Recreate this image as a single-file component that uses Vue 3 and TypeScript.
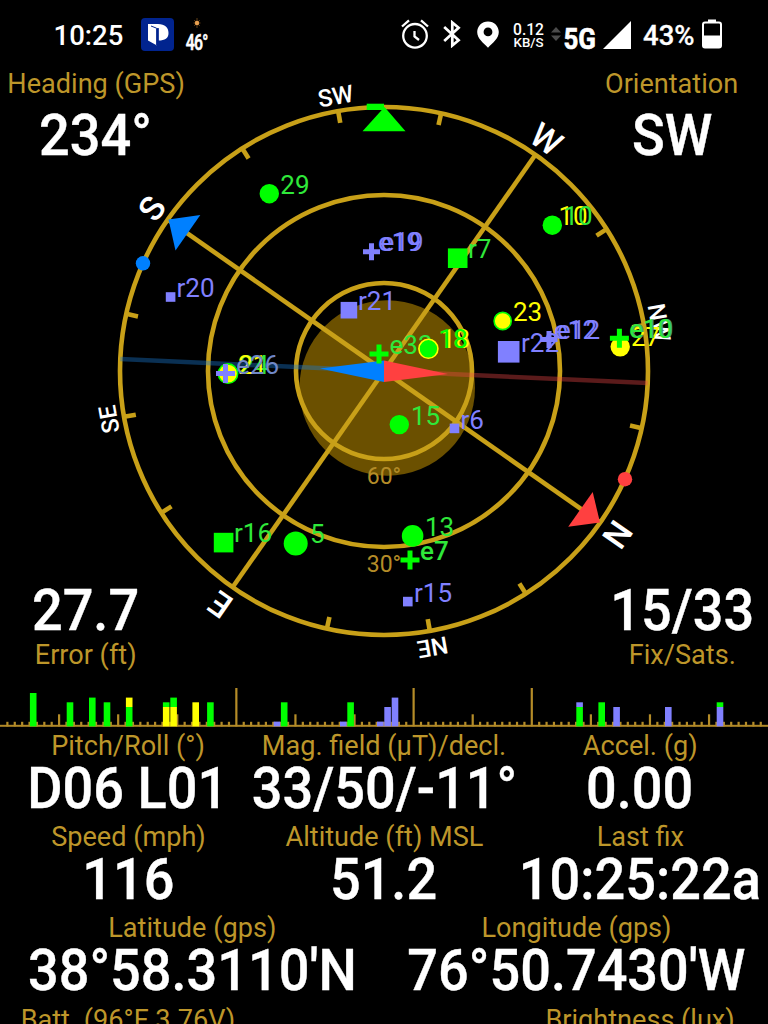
<script setup lang="ts">
type Shape = 'dot' | 'box' | 'plus'
interface Satellite {
  shape: Shape
  x: number
  y: number
  size: number
  color: string
  ring?: string
}
interface Tag {
  text: string
  x: number
  y: number
  color: string
  bold?: boolean
}
interface Bar {
  x: number
  parts: { top: number; bottom: number; color: string }[]
}

const G = '#00ff00'
const T = '#2fe83a'
const Y = '#ffff00'
const P = '#8080ff'
const BASE = 726.4

const cx = 384
const cy = 371
const rings = [264, 176, 88]
const minorTicks = [12.5, 57.5, 80, 102.5, 147.5, 170, 192.5, 237.5, 260, 282.5, 327.5, 350]
const cardinals = [
  { text: 'S', angle: -55, r: 271.5 },
  { text: 'W', angle: 35, r: 271 },
  { text: 'N', angle: 125, r: 273 },
  { text: 'E', angle: 215, r: 273 },
]
const intercardinals = [
  { text: 'SW', angle: -10, r: 270.7 },
  { text: 'NW', angle: 80, r: 271 },
  { text: 'NE', angle: 170, r: 272 },
  { text: 'SE', angle: -100, r: 270.7 },
]

const satellites: Satellite[] = [
  { shape: 'dot', x: 269.3, y: 193.7, size: 9.7, color: G },
  { shape: 'box', x: 170.6, y: 297, size: 9.6, color: P },
  { shape: 'box', x: 348.9, y: 310.2, size: 16.6, color: P },
  { shape: 'plus', x: 371.5, y: 251.7, size: 17, color: P },
  { shape: 'plus', x: 549, y: 339.5, size: 17, color: P },
  { shape: 'box', x: 457.7, y: 258.2, size: 19.6, color: G },
  { shape: 'dot', x: 552.3, y: 225.2, size: 9.7, color: G },
  { shape: 'dot', x: 502.7, y: 321, size: 8.6, color: Y, ring: G },
  { shape: 'box', x: 508.7, y: 351.8, size: 21.6, color: P },
  { shape: 'dot', x: 620.2, y: 346.8, size: 9.7, color: Y },
  { shape: 'plus', x: 619.4, y: 338.3, size: 19, color: G },
  { shape: 'plus', x: 379, y: 354, size: 19, color: G },
  { shape: 'dot', x: 428.4, y: 348.8, size: 9.5, color: G, ring: Y },
  { shape: 'dot', x: 228, y: 373.6, size: 9.7, color: Y, ring: G },
  { shape: 'plus', x: 225.5, y: 373.6, size: 19, color: P },
  { shape: 'box', x: 223.6, y: 542.6, size: 19.6, color: G },
  { shape: 'dot', x: 295.7, y: 543.6, size: 12, color: G },
  { shape: 'dot', x: 412.6, y: 535.9, size: 10.8, color: G },
  { shape: 'plus', x: 410, y: 560, size: 19, color: G },
  { shape: 'box', x: 407.8, y: 601.6, size: 9.6, color: P },
  { shape: 'dot', x: 399.3, y: 424.6, size: 9.7, color: G },
  { shape: 'box', x: 454.5, y: 428.4, size: 9.6, color: P },
]

const underTags: Tag[] = [
  { text: 'e33', x: 389.5, y: 354, color: T },
  { text: 'r22', x: 521, y: 351.5, color: P },
]

const tags: Tag[] = [
  { text: '29', x: 280.3, y: 194, color: T },
  { text: 'r20', x: 176.5, y: 296.8, color: P },
  { text: 'r21', x: 358, y: 310, color: P },
  { text: 'e19', x: 378, y: 251.3, color: P },
  { text: 'e19', x: 380.5, y: 251.3, color: P },
  { text: 'r7', x: 468, y: 258, color: T },
  { text: '10', x: 558.5, y: 225, color: Y },
  { text: '10', x: 563.5, y: 225, color: T },
  { text: '23', x: 513, y: 321, color: Y },
  { text: 'e12', x: 554, y: 339, color: P },
  { text: 'e12', x: 557, y: 339, color: P },
  { text: '27', x: 631, y: 346.3, color: Y },
  { text: 'e10', x: 630.5, y: 338.3, color: '#4aa070' },
  { text: 'e10', x: 629, y: 338.3, color: T },
  { text: '18', x: 441, y: 348.3, color: Y },
  { text: '18', x: 438.5, y: 348.3, color: G },
  { text: '24', x: 239.5, y: 373.5, color: T },
  { text: '21', x: 238, y: 373.5, color: Y },
  { text: 'e26', x: 236, y: 373.5, color: '#7088c8' },
  { text: 'r16', x: 234, y: 542.4, color: T },
  { text: '5', x: 310, y: 543.3, color: T },
  { text: '13', x: 425, y: 535.6, color: T },
  { text: 'e7', x: 420, y: 560, color: T, bold: true },
  { text: 'r15', x: 414, y: 601.6, color: P },
  { text: '15', x: 411, y: 424.8, color: T },
  { text: 'r6', x: 460.5, y: 428.6, color: P },
]

const solid = (x: number, top: number, color: string): Bar => ({ x, parts: [{ top, bottom: BASE, color }] })
const split = (x: number, top: number, upper: string, lower: string): Bar => ({
  x,
  parts: [
    { top, bottom: 707, color: upper },
    { top: 707, bottom: BASE, color: lower },
  ],
})

const bars: Bar[] = [
  solid(33.2, 693, G),
  solid(70, 702.3, G),
  solid(92.3, 697.6, G),
  solid(107, 702.3, G),
  split(129.2, 697.6, Y, G),
  split(166.2, 702.3, G, Y),
  split(173.6, 697.6, G, Y),
  solid(195.7, 702.3, Y),
  solid(210.4, 702.3, G),
  solid(277, 721.6, P),
  solid(284.2, 702.3, G),
  solid(343.3, 721.6, P),
  solid(350.6, 702.3, G),
  solid(380.3, 721.6, P),
  solid(387.6, 707, P),
  solid(395, 697.6, P),
  split(579.6, 702.3, P, G),
  solid(601.7, 702.3, G),
  solid(616.6, 707, P),
  solid(668.3, 707, P),
  split(720, 702.3, G, P),
]

const STEP = 7.386
const tall = [32, 56, 72]
const scaleTicks = Array.from({ length: 103 }, (_, i) => {
  const n = i + 1
  const top = tall.includes(n) ? 688 : n % 8 === 0 ? 714.3 : 721.8
  return { x: n * STEP, top }
})

const rows = [
  [
    { label: 'Pitch/Roll (°)', value: 'D06 L01' },
    { label: 'Mag. field (µT)/decl.', value: '33/50/-11°' },
    { label: 'Accel. (g)', value: '0.00' },
  ],
  [
    { label: 'Speed (mph)', value: '116' },
    { label: 'Altitude (ft) MSL', value: '51.2' },
    { label: 'Last fix', value: '10:25:22a' },
  ],
  [
    { label: 'Latitude (gps)', value: "38°58.3110'N" },
    { label: 'Longitude (gps)', value: "76°50.7430'W" },
  ],
  [
    { label: 'Batt. (96°F 3.76V)', value: '' },
    { label: '', value: '' },
    { label: 'Brightness (lux)', value: '' },
  ],
]
</script>

<template>
  <main class="screen">
    <header class="status">
      <span class="clock">10:25</span>
      <svg class="app" width="33" height="33" viewBox="0 0 33 33">
        <rect width="33" height="33" rx="4" fill="#01248f" />
        <path d="M7 6H17C24 6 27.5 9.500 27.500 15S24 22.500 17.500 22.500V10.500L11.500 8.200H16V27.500L7 22.500Z" fill="#fff" />
        <path d="M10 8L15.600 10.200V27.300M17.200 10V23" fill="none" stroke="#01248f" stroke-width="1" />
      </svg>
      <span class="weather">
        <svg width="8" height="10" viewBox="0 0 8 10">
          <path d="M4 0V10M.5 5H7.500M1.200 2L6.800 8M6.800 2L1.200 8" stroke="#8a5a20" stroke-width=".7" />
          <circle cx="4" cy="5" r="2.200" fill="#e8a050" />
        </svg>
        <span class="temp">46°</span>
      </span>
      <span class="grow"></span>
      <svg class="alarm" width="28" height="30" viewBox="0 0 28 30" fill="none" stroke="#fff" stroke-width="2.300">
        <circle cx="14" cy="16.800" r="11.800" />
        <path d="M13.500 12V17.500L18 21M1 7.500L8 1.300M20 1.300L27 7.500" />
      </svg>
      <svg class="bt" width="18" height="28" viewBox="0 0 18 28" fill="none" stroke="#fff" stroke-width="2.700">
        <path d="M1.200 7L15.600 20.300L9.300 25.500V2.500L15.600 7.700L1.200 21" />
      </svg>
      <svg class="pin" width="22" height="27" viewBox="0 0 22 27">
        <path d="M11 .5C4.800 .5.200 5.200.200 11C.2 17.500 6 21.500 11 26.800C16 21.500 21.800 17.500 21.800 11C21.800 5.200 17.200.500 11 .500ZM11 6.500A4.400 4.400 0 1 1 11 15.300A4.400 4.400 0 1 1 11 6.500Z" fill="#fff" fill-rule="evenodd" />
      </svg>
      <svg class="rate" width="32" height="30" viewBox="0 0 32 30">
        <text x="0" y="15.500" font-size="16.500" textLength="31" lengthAdjust="spacingAndGlyphs">0.12</text>
        <text x="0.500" y="27.500" font-size="13.500" textLength="30" lengthAdjust="spacingAndGlyphs">KB/S</text>
      </svg>
      <svg class="arrows" width="10" height="14" viewBox="0 0 10 14" fill="#4b4b4b">
        <path d="M0 5.500L5 0L10 5.500ZM0 8.500L5 14L10 8.500Z" />
      </svg>
      <svg class="net" width="34" height="40" viewBox="0 0 34 40">
        <text x="0.500" y="31.300" font-size="29.500" textLength="32.500" lengthAdjust="spacingAndGlyphs">5G</text>
      </svg>
      <svg class="signal" width="28" height="28" viewBox="0 0 28 28"><path d="M28 0V28H0Z" fill="#fff" /></svg>
      <span class="percent">43%</span>
      <svg class="battery" width="20" height="30" viewBox="0 0 20 30">
        <path d="M6 3V.500H14V3" fill="#fff" />
        <rect x="1" y="3.500" width="18" height="25" rx="2" fill="none" stroke="#fff" stroke-width="2" />
        <path d="M1 16.500H19V28.500H1Z" fill="#fff" />
      </svg>
    </header>

    <section class="sky">
      <svg class="plot" width="768" height="619" viewBox="0 67 768 619">
        <circle cx="387.200" cy="388" r="87.800" fill="#6b5000" />
        <g class="grid">
          <circle v-for="r in rings" :key="r" :cx="cx" :cy="cy" :r="r" />
          <path
            v-for="c in cardinals"
            :key="c.text"
            :d="`M${cx} ${cy}V${cy - 264}`"
            :transform="`rotate(${c.angle} ${cx} ${cy})`"
          />
          <path
            v-for="a in minorTicks"
            :key="a"
            :d="`M${cx} ${cy - 252}V${cy - 264}`"
            :transform="`rotate(${a} ${cx} ${cy})`"
          />
        </g>
        <g class="depth">
          <text x="384" y="483.500">60°</text>
          <text x="384" y="571.500">30°</text>
        </g>
        <g class="points">
          <text
            v-for="c in cardinals"
            :key="c.text"
            class="major"
            :x="cx"
            :y="cy - c.r"
            :transform="`rotate(${c.angle} ${cx} ${cy})`"
          >{{ c.text }}</text>
          <text
            v-for="c in intercardinals"
            :key="c.text"
            :x="cx"
            :y="cy - c.r"
            :transform="`rotate(${c.angle} ${cx} ${cy})`"
          >{{ c.text }}</text>
        </g>
        <path d="M362.500 131.300H405.500L384.500 107Z" fill="#0f0" />
        <path d="M366.700 103.700H384V110H366.700Z" fill="#0f0" />
        <path d="M168.500 219.500L200.300 215L175.500 250.500Z" fill="#0080ff" />
        <path d="M600 522.500L592.700 492L568.200 526.700Z" fill="#ff4040" />
        <circle cx="143" cy="263.300" r="7.200" fill="#0080ff" />
        <circle cx="625" cy="479.200" r="7.200" fill="#ff4040" />
        <g :transform="`rotate(2.6 ${cx} ${cy})`">
          <path d="M120 371H384" stroke="#1878d0" stroke-opacity=".4" stroke-width="4.500" />
          <path d="M384 371H648" stroke="#f04848" stroke-opacity=".38" stroke-width="4.500" />
        </g>
        <path d="M320 368.500L384 360.500V382Z" fill="#0080ff" />
        <path d="M448 374L384 360.500V382Z" fill="#ff4040" />

        <g class="tags">
          <text v-for="t in underTags" :key="t.text" :x="t.x" :y="t.y" :fill="t.color">{{ t.text }}</text>
        </g>
        <template v-for="(s, i) in satellites" :key="'s' + i">
          <circle
            v-if="s.shape === 'dot'"
            :cx="s.x"
            :cy="s.y"
            :r="s.size"
            :fill="s.color"
            :stroke="s.ring ?? 'none'"
            stroke-width="1.6"
          />
          <rect
            v-else-if="s.shape === 'box'"
            :x="s.x - s.size / 2"
            :y="s.y - s.size / 2"
            :width="s.size"
            :height="s.size"
            :fill="s.color"
          />
          <path
            v-else
            :d="`M${s.x - s.size / 2} ${s.y}h${s.size}M${s.x} ${s.y - s.size / 2}v${s.size}`"
            :stroke="s.color"
            stroke-width="5"
          />
        </template>
        <g class="tags">
          <text
            v-for="(t, i) in tags"
            :key="'t' + i"
            :class="{ bold: t.bold }"
            :x="t.x"
            :y="t.y"
            :fill="t.color"
          >{{ t.text }}</text>
        </g>
      </svg>

      <div class="corner top left">
        <span class="label">Heading (GPS)</span>
        <span class="value">234°</span>
      </div>
      <div class="corner top right">
        <span class="label">Orientation</span>
        <span class="value">SW</span>
      </div>
      <div class="corner bottom left">
        <span class="value">27.7</span>
        <span class="label">Error (ft)</span>
      </div>
      <div class="corner bottom right">
        <span class="value">15/33</span>
        <span class="label">Fix/Sats.</span>
      </div>
    </section>

    <svg class="snr" width="768" height="44" viewBox="0 686 768 44">
      <rect x="0" y="724.800" width="768" height="2" fill="#b08828" />
      <rect v-for="t in scaleTicks" :key="t.x" :x="t.x - 1.1" :y="t.top" width="2.2" :height="BASE - t.top" fill="#b48c28" />
      <template v-for="b in bars" :key="b.x">
        <rect
          v-for="p in b.parts"
          :key="p.top"
          :x="b.x - 3.3"
          :y="p.top"
          width="6.6"
          :height="p.bottom - p.top"
          :fill="p.color"
        />
      </template>
    </svg>

    <section v-for="(row, i) in rows" :key="i" class="row">
      <div v-for="(cell, j) in row" :key="j" class="cell">
        <span class="label">{{ cell.label }}</span>
        <span class="value">{{ cell.value }}</span>
      </div>
    </section>
  </main>
</template>

<style>
html,
body {
  margin: 0;
  background: #000;
}
</style>

<style scoped>
.screen {
  display: flex;
  flex-direction: column;
  width: 768px;
  height: 1024px;
  overflow: hidden;
  background: #000;
  color: #fff;
  font-family: Roboto, 'Liberation Sans', sans-serif;
}
.screen svg {
  display: block;
  flex: none;
}
.status {
  display: flex;
  flex: none;
  align-items: flex-start;
  box-sizing: border-box;
  height: 67px;
  padding: 18px 46px 0 53px;
  font-size: 27.5px;
  font-weight: 500;
  line-height: 36px;
}
.clock {
  width: 88px;
  text-indent: 0.5px;
}
.weather {
  display: flex;
  flex-direction: column;
  align-items: center;
  gap: 4px;
  width: 22px;
  margin-left: 12px;
}
.temp {
  font-size: 22.5px;
  line-height: 21px;
  letter-spacing: -1px;
  transform: scaleX(0.7);
  -webkit-text-stroke: 0.6px #fff;
}
.grow {
  flex: 1;
}
.alarm {
  margin: 1px 14px 0 0;
}
.bt {
  margin: 2px 16px 0 0;
}
.pin {
  margin: 3px 14px 0 0;
}
.rate {
  margin: 1px 6px 0 0;
  fill: #fff;
}
.arrows {
  margin: 9px 2px 0 0;
}
.net {
  margin: 0 6px 0 0;
  fill: #fff;
  stroke: #fff;
  stroke-width: 0.6px;
  font-weight: 700;
}
.signal {
  margin: 3px 12px 0 0;
}
.percent {
  width: 59px;
  -webkit-text-stroke: 0.3px #fff;
}
.battery {
  margin-top: 1px;
}
.sky {
  display: grid;
  flex: none;
  height: 619px;
}
.plot,
.corner {
  grid-area: 1 / 1;
}
.grid {
  fill: none;
  stroke: #c8a018;
  stroke-width: 4.6px;
}
.depth {
  fill: #b48c28;
  font-size: 23px;
  text-anchor: middle;
}
.points {
  fill: #fff;
  font-size: 24px;
  font-weight: 500;
  text-anchor: middle;
}
.major {
  font-size: 34px;
}
.tags {
  font-size: 26px;
}
.bold {
  font-weight: 500;
}
.corner,
.cell {
  display: flex;
  flex-direction: column;
  align-items: center;
}
.top {
  align-self: start;
  width: 192px;
  gap: 9px;
  padding-top: 1px;
}
.bottom {
  align-self: end;
  width: 172px;
  gap: 3px;
  margin-bottom: 15px;
}
.left {
  justify-self: start;
}
.right {
  justify-self: end;
}
.label {
  height: 32px;
  color: #bd962a;
  font-size: 27.5px;
  line-height: 32px;
  white-space: nowrap;
  transform: scaleX(0.985);
}
.value {
  height: 52px;
  font-size: 58px;
  font-weight: 500;
  line-height: 52px;
  white-space: nowrap;
  transform: scaleX(0.932);
  -webkit-text-stroke: 0.4px #fff;
}
.snr {
  flex: none;
}
.row {
  display: flex;
  flex: none;
  height: 91.2px;
}
.cell {
  flex: 1 1 0;
  width: 0;
}
</style>
